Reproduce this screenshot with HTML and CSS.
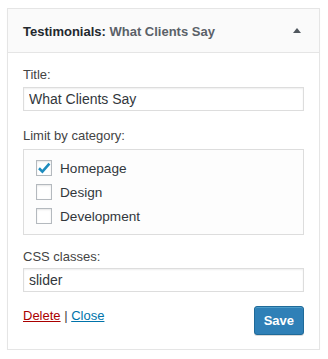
FILE: index.html
```html
<!DOCTYPE html>
<html lang="en">
<head>
    <meta charset="UTF-8">
    <meta name="viewport" content="width=device-width, initial-scale=1.0">
    <title>Testimonials widget</title>
    <link rel="stylesheet" href="styles.css">
</head>
<body>

<div class="widget">
    <div class="widget-top">
        <h3>Testimonials: <span class="in-title">What Clients Say</span></h3>
        <span class="toggle"></span>
    </div>

    <div class="widget-inside">
        <div class="field">
            <label class="field-label">Title:</label>
            <input class="text-input" type="text" value="What Clients Say">
        </div>

        <div class="field field-cats">
            <label class="field-label">Limit by category:</label>
            <ul class="cat-list">
                <li>
                    <span class="check checked">
                        <svg width="14" height="14" viewBox="0 0 14 14"><path d="M2 7.3 L5.4 10.6 L12.4 2.6" fill="none" stroke="#1e8cbe" stroke-width="2.6" stroke-linejoin="miter"/></svg>
                    </span>
                    Homepage
                </li>
                <li><span class="check"></span> Design</li>
                <li><span class="check"></span> Development</li>
            </ul>
        </div>

        <div class="field field-css">
            <label class="field-label">CSS classes:</label>
            <input class="text-input" type="text" value="slider">
        </div>

        <div class="widget-actions">
            <div class="links">
                <a href="#" class="delete">Delete</a> | <a href="#" class="close">Close</a>
            </div>
            <button class="save">Save</button>
        </div>
    </div>
</div>

</body>
</html>
```

FILE: styles.css
```css
body {
    margin: 0;
    padding: 8px 0 0 7px;
    font-family: "Liberation Sans", Arial, sans-serif;
    font-size: 13px;
    color: #444;
    background: #fff;
}
.widget {
    width: 313px;
    box-sizing: border-box;
    border: 1px solid #e5e5e5;
    background: #fff;
    box-shadow: 0 1px 1px rgba(0, 0, 0, 0.04);
}
.widget-top {
    height: 43px;
    display: flex;
    align-items: center;
    justify-content: space-between;
    padding: 0 18px 0 15px;
    background: #fafafa;
    border-bottom: 1px solid #e5e5e5;
}
.widget-top h3 {
    margin: 0;
    font-size: 13px;
    font-weight: bold;
    color: #23282d;
    line-height: 18px;
    padding-top: 2px;
}
.in-title {
    color: #5b6168;
}
.toggle {
    width: 0;
    height: 0;
    border-left: 4px solid transparent;
    border-right: 4px solid transparent;
    border-bottom: 5px solid #50575e;
    margin-top: -1px;
}
.widget-inside {
    padding: 13px 15px 14px;
}
.field-label {
    display: block;
    line-height: 18px;
    margin-bottom: 3px;
}
.text-input {
    display: block;
    width: 100%;
    box-sizing: border-box;
    height: 24px;
    margin: 0;
    padding: 2px 5px;
    border: 1px solid #ddd;
    box-shadow: inset 0 1px 2px rgba(0, 0, 0, 0.07);
    font-family: "Liberation Sans", Arial, sans-serif;
    font-size: 14px;
    color: #32373c;
    background: #fff;
}
.field-cats {
    margin-top: 16px;
}
.field-cats .field-label {
    margin-bottom: 4px;
}
.cat-list {
    list-style: none;
    margin: 0;
    padding: 6px 12px;
    border: 1px solid #ddd;
    background: #fdfdfd;
}
.cat-list li {
    height: 24px;
    display: flex;
    align-items: center;
    gap: 8px;
    font-size: 13.6px;
    color: #32373c;
}
.check {
    width: 16px;
    height: 16px;
    box-sizing: border-box;
    border: 1px solid #b4b9be;
    background: #fff;
    box-shadow: inset 0 1px 2px rgba(0, 0, 0, 0.1);
    display: flex;
    align-items: center;
    justify-content: center;
}
.field-css {
    margin-top: 13px;
}
.field-css .field-label {
    margin-bottom: 2px;
}
.widget-actions {
    display: flex;
    justify-content: space-between;
    align-items: flex-start;
    margin-top: 14px;
}
.links {
    line-height: 18px;
    font-size: 13px;
    padding-top: 1px;
    color: #444;
}
.delete {
    color: #a00;
}
.close {
    color: #0073aa;
}
.save {
    height: 29px;
    padding: 0 9px;
    border: 1px solid #1f6a99;
    border-radius: 3px;
    background: #2f80b7;
    color: #fff;
    font-family: "Liberation Sans", Arial, sans-serif;
    font-size: 13px;
    font-weight: bold;
    box-shadow: inset 0 1px 0 rgba(120, 200, 230, 0.4), 0 1px 0 rgba(0, 0, 0, 0.15);
}
```
